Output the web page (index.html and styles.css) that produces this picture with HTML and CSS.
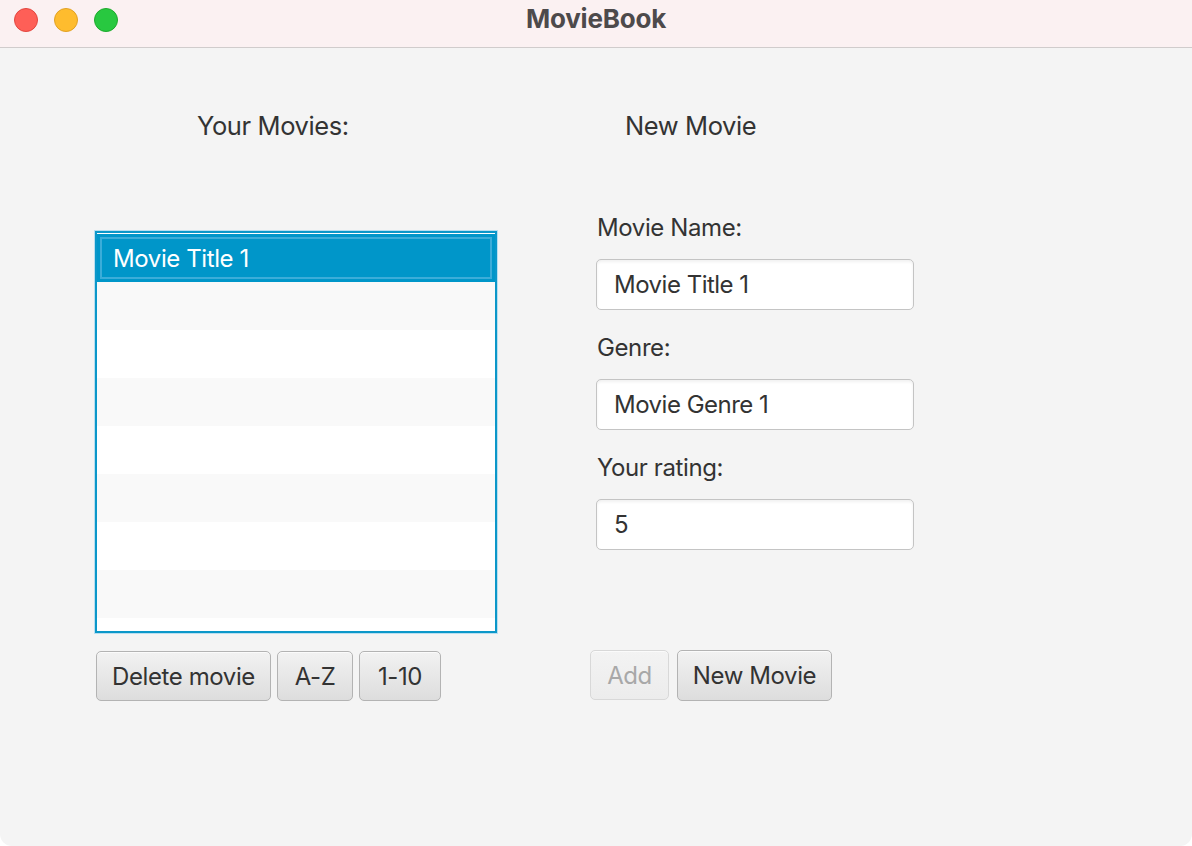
FILE: index.html
```html
<!DOCTYPE html>
<html>
<head>
<meta charset="utf-8">
<link rel="stylesheet" href="styles.css">
</head>
<body>
<div class="window">
  <div class="titlebar">
    <div class="lights">
      <span class="light red"></span>
      <span class="light yellow"></span>
      <span class="light green"></span>
    </div>
    <div class="title">MovieBook</div>
  </div>
  <div class="content">
    <div class="col-left">
      <div class="heading left-heading">Your Movies:</div>
      <div class="list">
        <div class="row selected"><span>Movie Title 1</span></div>
        <div class="row odd"></div>
        <div class="row"></div>
        <div class="row odd"></div>
        <div class="row"></div>
        <div class="row odd"></div>
        <div class="row"></div>
        <div class="row odd"></div>
        <div class="row last"></div>
      </div>
      <div class="buttons">
        <button class="btn btn-delete">Delete movie</button>
        <button class="btn btn-az">A-Z</button>
        <button class="btn btn-num">1-10</button>
      </div>
    </div>
    <div class="col-right">
      <div class="heading right-heading">New Movie</div>
      <div class="form">
        <div class="label">Movie Name:</div>
        <div class="field">Movie Title 1</div>
        <div class="label">Genre:</div>
        <div class="field">Movie Genre 1</div>
        <div class="label">Your rating:</div>
        <div class="field">5</div>
      </div>
      <div class="buttons right-buttons">
        <button class="btn btn-add" disabled>Add</button>
        <button class="btn btn-new">New Movie</button>
      </div>
    </div>
  </div>
</div>
</body>
</html>
```
FILE: styles.css
```css
html, body {
  margin: 0;
  padding: 0;
  background: #ffffff;
}
body {
  width: 1192px;
  height: 846px;
  overflow: hidden;
  font-family: Inter, "Liberation Sans", sans-serif;
  color: #333333;
}
.window {
  width: 1192px;
  height: 846px;
  display: flex;
  flex-direction: column;
  background: #f4f4f4;
  border-radius: 0 0 12px 12px;
  overflow: hidden;
}
.titlebar {
  height: 48px;
  flex: none;
  box-sizing: border-box;
  background: #fbf1f2;
  border-bottom: 1px solid #d0cccc;
  display: flex;
  align-items: flex-start;
  position: relative;
}
.lights {
  display: flex;
  gap: 16px;
  padding-left: 14px;
  padding-top: 8px;
}
.light {
  width: 24px;
  height: 24px;
  border-radius: 50%;
  box-sizing: border-box;
}
.red { background: #fe5f57; border: 1px solid #e2463f; }
.yellow { background: #febc2e; border: 1px solid #e1a123; }
.green { background: #28c840; border: 1px solid #1daa2c; }
.title {
  position: absolute;
  left: 0;
  right: 0;
  top: 0;
  height: 38px;
  line-height: 38px;
  text-align: center;
  font-weight: 700;
  font-size: 26px;
  color: #4d4a4b;
  letter-spacing: -0.2px;
}
.content {
  flex: 1;
  display: flex;
  padding-left: 95px;
}
.col-left {
  width: 402px;
  display: flex;
  flex-direction: column;
}
.heading {
  font-size: 25.5px;
  letter-spacing: -0.4px;
  color: #333333;
  height: 28px;
  line-height: 28px;
}
.left-heading {
  margin-top: 64px;
  padding-left: 102px;
}
.list {
  margin-top: 91px;
  width: 402px;
  height: 402px;
  box-sizing: border-box;
  border: 2px solid #0b97c9;
  padding-top: 1px;
  box-shadow: 0 0 0 1px #b8dff0;
  background: #ffffff;
  display: flex;
  flex-direction: column;
  overflow: hidden;
}
.row {
  height: 48px;
  flex: none;
  background: #ffffff;
}
.row.odd { background: #f9f9f9; }
.row.selected {
  background: #0096c9;
  outline: 2px solid #3badd9;
  outline-offset: -5px;
  height: 48px;
  color: #ffffff;
  font-size: 24px;
  letter-spacing: -0.4px;
  line-height: 50px;
  padding-left: 16px;
}
.buttons {
  display: flex;
  gap: 6px;
  margin-top: 18px;
}
.btn {
  height: 50px;
  box-sizing: border-box;
  border: 1px solid #b3b3b3;
  border-radius: 5px;
  background: linear-gradient(#f2f2f2, #dddddd);
  box-shadow: inset 0 1px 0 #fbfbfb;
  font-family: Inter, "Liberation Sans", sans-serif;
  font-size: 24px;
  letter-spacing: -0.4px;
  color: #333333;
  padding: 0;
  text-align: center;
}
.btn-delete { width: 175px; margin-left: 1px; }
.btn-az { width: 76px; }
.btn-num { width: 82px; }
.col-right {
  margin-left: 93px;
  display: flex;
  flex-direction: column;
}
.right-heading {
  margin-top: 64px;
  padding-left: 35px;
}
.form {
  margin-top: 74px;
  display: flex;
  flex-direction: column;
  padding-left: 6px;
}
.label {
  font-size: 24px;
  letter-spacing: -0.4px;
  height: 28px;
  line-height: 28px;
  margin-left: 1px;
}
.field {
  margin-top: 17px;
  margin-bottom: 24px;
  width: 318px;
  height: 51px;
  box-sizing: border-box;
  border: 1px solid #c4c4c4;
  border-radius: 5px;
  background: #ffffff;
  box-shadow: inset 0 2px 3px rgba(0,0,0,0.06);
  font-size: 24px;
  letter-spacing: -0.5px;
  line-height: 49px;
  padding-left: 17px;
  color: #333333;
}
.right-buttons {
  margin-top: 76px;
  gap: 8px;
}
.btn-add {
  width: 79px;
  color: #a8a8a8;
  border-color: #d8d8d8;
  background: linear-gradient(#f3f3f3, #ececec);
}
.btn-new { width: 155px; height: 51px; }
```
